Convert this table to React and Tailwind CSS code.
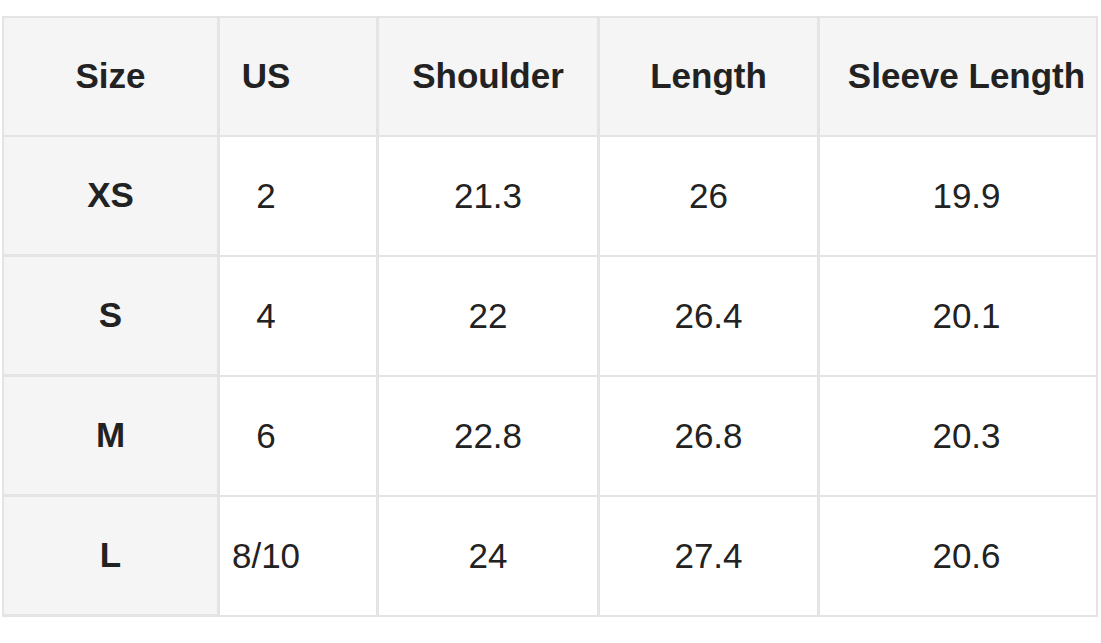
import React from "react";

const HEADERS = ["Size", "US", "Shoulder", "Length", "Sleeve Length"];

const ROWS = [
  ["XS", "2", "21.3", "26", "19.9"],
  ["S", "4", "22", "26.4", "20.1"],
  ["M", "6", "22.8", "26.8", "20.3"],
  ["L", "8/10", "24", "27.4", "20.6"],
];

// per-column text offsets (US values sit left of centre, sleeve a bit right)
const COL_PAD = ["", "pr-[64px]", "", "", "pl-[17px]"];

function Cell({ children, col, head, shaded }) {
  return (
    <div
      className={`flex items-center justify-center text-[35px] text-[#222] ${
        head ? "font-bold h-[117px]" : "h-[118px]"
      } ${shaded ? "bg-[#f5f5f5]" : "bg-white"} ${COL_PAD[col]}`}
    >
      {children}
    </div>
  );
}

export default function App() {
  return (
    <div
      className="w-[1101px] h-[643px] bg-white pt-[16px] pl-[2px] overflow-hidden"
      style={{ fontFamily: '"Liberation Sans", Arial, sans-serif' }}
    >
      <div className="grid w-[1096px] grid-cols-[213px_156px_218px_217px_276px] gap-x-[3px] gap-y-[2px] p-[2px] bg-[#e4e4e4]">
        {HEADERS.map((h, i) => (
          <Cell key={h} col={i} head shaded>
            {h}
          </Cell>
        ))}
        {ROWS.map((row) =>
          row.map((v, i) => (
            <Cell key={row[0] + i} col={i} head={i === 0} shaded={i === 0}>
              <span className={i === 0 ? "font-bold" : ""}>{v}</span>
            </Cell>
          ))
        )}
      </div>
    </div>
  );
}
